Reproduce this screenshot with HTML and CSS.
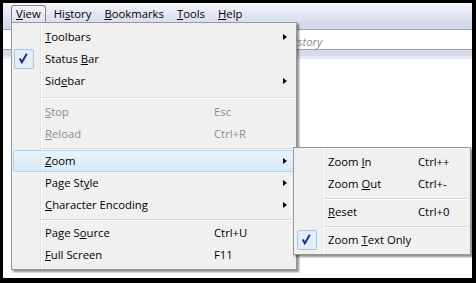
FILE: index.html
```html
<!DOCTYPE html>
<html>
<head>
<meta charset="utf-8">
<link rel="stylesheet" href="styles.css">
</head>
<body>
<div class="window">
  <div class="menubar">
    <span class="mb-item open"><u>V</u>iew</span>
    <span class="mb-item">Hi<u>s</u>tory</span>
    <span class="mb-item"><u>B</u>ookmarks</span>
    <span class="mb-item"><u>T</u>ools</span>
    <span class="mb-item"><u>H</u>elp</span>
  </div>
  <div class="toolbar"></div>
  <div class="searchbar"><span class="placeholder">History</span></div>
  <div class="band"></div>
  <div class="band-light"></div>
  <div class="content"></div>

  <div class="menu main-menu">
    <div class="item"><span class="icon"></span><span class="label"><u>T</u>oolbars</span><span class="key"></span><span class="arrow"></span></div>
    <div class="item"><span class="icon"><span class="check"><svg width="20" height="20" viewBox="0 0 20 20"><path d="M6 9.5 L8.3 13.5 L13.5 4.5" fill="none" stroke="#1d2b8f" stroke-width="2" stroke-linejoin="miter"/></svg></span></span><span class="label">Status <u>B</u>ar</span><span class="key"></span><span></span></div>
    <div class="item"><span class="icon"></span><span class="label">Sid<u>e</u>bar</span><span class="key"></span><span class="arrow"></span></div>
    <div class="sep sep-a"></div>
    <div class="item disabled"><span class="icon"></span><span class="label"><u>S</u>top</span><span class="key">Esc</span><span></span></div>
    <div class="item disabled"><span class="icon"></span><span class="label"><u>R</u>eload</span><span class="key">Ctrl+R</span><span></span></div>
    <div class="sep sep-b"></div>
    <div class="item hot"><span class="icon"></span><span class="label"><u>Z</u>oom</span><span class="key"></span><span class="arrow"></span></div>
    <div class="item"><span class="icon"></span><span class="label">Page St<u>y</u>le</span><span class="key"></span><span class="arrow"></span></div>
    <div class="item"><span class="icon"></span><span class="label"><u>C</u>haracter Encoding</span><span class="key"></span><span class="arrow"></span></div>
    <div class="sep sep-c"></div>
    <div class="item"><span class="icon"></span><span class="label">Page S<u>o</u>urce</span><span class="key">Ctrl+U</span><span></span></div>
    <div class="item"><span class="icon"></span><span class="label"><u>F</u>ull Screen</span><span class="key">F11</span><span></span></div>
  </div>

  <div class="menu sub-menu">
    <div class="item"><span class="icon"></span><span class="label">Zoom <u>I</u>n</span><span class="key">Ctrl++</span></div>
    <div class="item"><span class="icon"></span><span class="label">Zoom <u>O</u>ut</span><span class="key">Ctrl+-</span></div>
    <div class="sep sep-c"></div>
    <div class="item"><span class="icon"></span><span class="label"><u>R</u>eset</span><span class="key">Ctrl+0</span></div>
    <div class="sep sep-c"></div>
    <div class="item"><span class="icon"><span class="check"><svg width="20" height="20" viewBox="0 0 20 20"><path d="M6 9.5 L8.3 13.5 L13.5 4.5" fill="none" stroke="#1d2b8f" stroke-width="2" stroke-linejoin="miter"/></svg></span></span><span class="label">Zoom <u>T</u>ext Only</span><span class="key"></span></div>
  </div>
</div>
</body>
</html>
```

FILE: styles.css
```css
html, body {
  margin: 0;
  padding: 0;
  background: #000;
}

body {
  font-family: "Open Sans", "Noto Sans", sans-serif;
  font-size: 11.3px;
  color: #000;
}

u {
  text-decoration: underline;
  text-underline-offset: 1px;
  text-decoration-thickness: 1px;
}

.window {
  position: relative;
  width: 469px;
  height: 275px;
  margin: 3px;
  background: #fff;
  overflow: hidden;
  display: flex;
  flex-direction: column;
}

.menubar {
  height: 19px;
  flex: none;
  display: flex;
  align-items: stretch;
  padding-left: 8px;
  gap: 3px;
  background: linear-gradient(#f8f9fc, #e7eaf4 45%, #d9deee);
}

.mb-item {
  display: flex;
  align-items: center;
  padding: 0 4px;
  margin-top: 2px;
  border: 1px solid transparent;
  border-bottom: none;
  border-radius: 3px 3px 0 0;
  line-height: 1;
}

.mb-item.open {
  border-color: #7f8590;
  background: linear-gradient(#f3f4f7, #dfe2ea);
}

.toolbar {
  height: 7px;
  flex: none;
  background: #d3d8ea;
  border-bottom: 1px solid #9fa3ad;
}

.searchbar {
  height: 20px;
  flex: none;
  background: #fff;
  border-bottom: 1px solid #9ea2aa;
  display: flex;
  align-items: center;
  padding-left: 284px;
  padding-top: 3px;
  box-sizing: border-box;
}

.placeholder {
  font-style: italic;
  color: #8a8d94;
}

.band {
  height: 6px;
  flex: none;
  background: #d6dbec;
}

.band-light {
  height: 3px;
  flex: none;
  background: #e6e9f3;
}

.content {
  flex: 1;
  background: #fff;
}

/* Menus */
.menu {
  position: absolute;
  box-sizing: border-box;
  border: 1px solid #979797;
  padding: 3px 1px;
  box-shadow: 2px 2px 2px rgba(0, 0, 0, 0.45);
  display: flex;
  flex-direction: column;
}

.main-menu {
  left: 8px;
  top: 19px;
  width: 286px;
  background: linear-gradient(to right, #f0f0f0 28px, #e2e3e3 28px, #e2e3e3 29px, #ffffff 29px, #ffffff 30px, #f0f0f0 30px);
}

.sub-menu {
  left: 290px;
  top: 144px;
  width: 178px;
  background: linear-gradient(to right, #f0f0f0 28px, #e2e3e3 28px, #e2e3e3 29px, #ffffff 29px, #ffffff 30px, #f0f0f0 30px);
}

.item {
  height: 22px;
  flex: none;
  box-sizing: border-box;
  display: grid;
  align-items: center;
  border: 1px solid transparent;
  border-radius: 3px;
}

.main-menu .item {
  grid-template-columns: 31px 169px 1fr 11px;
}

.sub-menu .item {
  grid-template-columns: 32px 90px 1fr;
}

.item.hot {
  background: linear-gradient(#e9f2fa, #dae9f6);
  border-color: #a9d6ec;
}

.item.disabled {
  color: #8d8d8d;
}

.icon {
  height: 20px;
  display: flex;
  align-items: center;
}

.check {
  width: 20px;
  height: 20px;
  box-sizing: border-box;
  border: 1px solid #a9c6dc;
  border-radius: 2px;
  background: #e3edf7;
  display: flex;
}

.sub-menu .check {
  margin-left: 1px;
}

.check svg {
  margin: -1px 0 0 -1px;
}

.label, .key {
  white-space: nowrap;
  line-height: 1;
}

.arrow {
  width: 0;
  height: 0;
  border-left: 4px solid #000;
  border-top: 3.5px solid transparent;
  border-bottom: 3.5px solid transparent;
}

.sep {
  flex: none;
  position: relative;
}

.sep::after {
  content: "";
  position: absolute;
  left: 28px;
  right: 0;
  top: 50%;
  height: 1px;
  background: #d7d7d7;
  box-shadow: 0 1px 0 #fff;
}

.sep-a { height: 9px; }
.sep-b { height: 5px; }
.sep-c { height: 6px; }
```
